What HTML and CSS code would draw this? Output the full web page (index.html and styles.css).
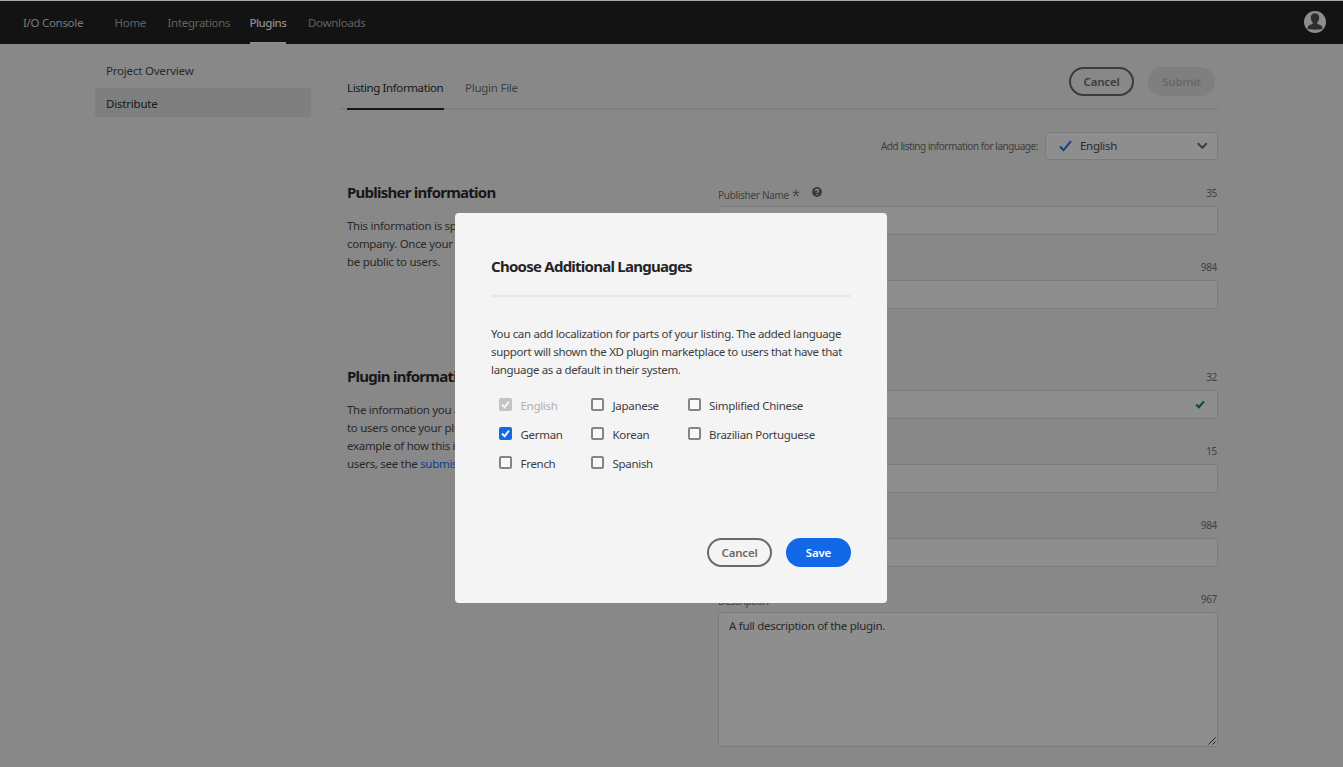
FILE: index.html
```html
<!DOCTYPE html>
<html lang="en">
<head>
<meta charset="utf-8">
<title>I/O Console</title>
<link rel="stylesheet" href="styles.css">
</head>
<body>
<header class="topbar">
  <span class="brand">I/O Console</span>
  <nav class="nav">
    <a class="nav-item home">Home</a>
    <a class="nav-item integrations">Integrations</a>
    <a class="nav-item plugins active">Plugins</a>
    <a class="nav-item downloads">Downloads</a>
  </nav>
  <svg class="avatar" width="22" height="22" viewBox="0 0 22 22"><circle cx="11" cy="11" r="11" fill="#8d8d8d"/><path d="M11 2.200c2.600 0 4.200 1.700 4.200 4.200 0 2-.8 3.600-1.700 4.700-.5.700-.4 1.900.5 2.200 2.500.6 4.400 1.500 4.400 3.600v.9c-1.700 1.200-13.100 1.200-14.800 0v-.9c0-2.100 1.900-3 4.400-3.600.9-.3 1-1.500.5-2.200C7.600 10 6.800 8.400 6.800 6.400c0-2.500 1.600-4.200 4.200-4.200z" fill="#2e2e2e"/></svg>
</header>
<div class="page">
  <aside class="sidebar">
    <a class="side-item overview">Project Overview</a>
    <a class="side-item distribute selected">Distribute</a>
  </aside>
  <main class="main">
    <div class="main-head">
      <div class="tabs">
        <a class="tab listing active">Listing Information</a>
        <a class="tab file">Plugin File</a>
      </div>
      <div class="actions">
        <button class="btn outline dim">Cancel</button>
        <button class="btn disabled">Submit</button>
      </div>
    </div>
    <div class="lang-row">
      <span class="lang-label">Add listing information for language:</span>
      <div class="select">
        <svg width="14" height="12" viewBox="0 0 14 12"><path d="M1 6.500L4.600 10.200 12 1.200" fill="none" stroke="#0c3f8c" stroke-width="1.900"/></svg>
        <span class="select-value">English</span>
        <svg width="12" height="8" viewBox="0 0 12 8"><path d="M2.300 1.800L6.300 5.800 10.300 1.800" fill="none" stroke="#3d3d3d" stroke-width="2" stroke-linecap="round" stroke-linejoin="round"/></svg>
      </div>
    </div>
    <section class="section publisher">
      <div class="intro">
        <h2>Publisher information</h2>
        <p>This information is specific<br>company. Once your<br>be public to users.</p>
      </div>
      <div class="fields">
        <div class="field">
          <div class="field-top"><span class="field-label">Publisher Name</span>
            <svg class="star" width="8" height="8" viewBox="0 0 8 8"><path d="M4 .4V4M.6 3L4 4 7.400 3M1.900 7.200L4 4l2.100 3.200" fill="none" stroke="#444" stroke-width="1.100"/></svg>
            <svg class="help" width="10" height="10" viewBox="0 0 10 10"><circle cx="5" cy="5" r="5" fill="#3c3c3c"/><path d="M3.500 3.700C3.700 1.900 6.500 2.100 6.500 3.800 6.500 4.900 5 4.800 5 6M5 7v1" fill="none" stroke="#929292" stroke-width="1.200"/></svg>
            <span class="count">35</span></div>
          <div class="input"></div>
        </div>
        <div class="field"><div class="field-top"><span class="count">984</span></div><div class="input"></div></div>
      </div>
    </section>
    <section class="section plugin">
      <div class="intro">
        <h2>Plugin information</h2>
        <p>The information you add<br>to users once your plugin<br>example of how this is<br>users, see the <a class="link">submission</a></p>
      </div>
      <div class="fields">
        <div class="field"><div class="field-top"><span class="count">32</span></div><div class="input valid"><svg width="10" height="9" viewBox="0 0 10 9"><path d="M1.200 4.500L3.900 7.300 8.900 1.400" fill="none" stroke="#0b4a35" stroke-width="2.100"/></svg></div></div>
        <div class="field"><div class="field-top"><span class="count">15</span></div><div class="input"></div></div>
        <div class="field"><div class="field-top"><span class="count">984</span></div><div class="input"></div></div>
        <div class="field">
          <div class="field-top"><span class="field-label desc">Description</span>
            <svg class="star" width="8" height="8" viewBox="0 0 8 8"><path d="M4 .4V4M.6 3L4 4 7.400 3M1.900 7.200L4 4l2.100 3.200" fill="none" stroke="#444" stroke-width="1.100"/></svg>
            <svg class="help" width="10" height="10" viewBox="0 0 10 10"><circle cx="5" cy="5" r="5" fill="#3c3c3c"/></svg>
            <span class="count">967</span></div>
          <div class="input textarea"><span class="textarea-value">A full description of the plugin.</span>
            <svg class="grip" width="8" height="8" viewBox="0 0 8 8"><path d="M.5 7.500l7-7M4.500 7.500l3-3" stroke="#222" stroke-width="1"/></svg></div>
        </div>
      </div>
    </section>
  </main>
</div>
<div class="overlay">
  <div class="modal">
    <h1>Choose Additional Languages</h1>
    <p class="modal-text">You can add localization for parts of your listing. The added language<br>support will shown the XD plugin marketplace to users that have that<br>language as a default in their system.</p>
    <div class="langs">
      <label class="check off"><span class="box"><svg width="13" height="13" viewBox="0 0 13 13"><path d="M3 6.500L5.600 9.200 10 3.600" fill="none" stroke="#f4f4f4" stroke-width="1.900"/></svg></span>English</label>
      <label class="check"><span class="box"></span>Japanese</label>
      <label class="check"><span class="box"></span>Simplified Chinese</label>
      <label class="check on"><span class="box"><svg width="13" height="13" viewBox="0 0 13 13"><path d="M3 6.500L5.600 9.200 10 3.600" fill="none" stroke="#f4f4f4" stroke-width="1.900"/></svg></span>German</label>
      <label class="check"><span class="box"></span>Korean</label>
      <label class="check"><span class="box"></span>Brazilian Portuguese</label>
      <label class="check"><span class="box"></span>French</label>
      <label class="check"><span class="box"></span>Spanish</label>
    </div>
    <div class="modal-actions">
      <button class="btn outline">Cancel</button>
      <button class="btn primary">Save</button>
    </div>
  </div>
</div>
</body>
</html>
```
FILE: styles.css
```css
* { box-sizing: border-box; }
body {
  margin: 0;
  height: 767px;
  overflow: hidden;
  background: #888;
  border-top: 1px solid #a8a8a8;
  font-family: "Noto Sans", "Open Sans", sans-serif;
  font-size: 11.5px;
  letter-spacing: -0.3px;
  line-height: 18px;
  color: #282828;
  white-space: nowrap;
}
h1, h2, p { margin: 0; }

.topbar { display: flex; height: 43px; padding-left: 23px; background: #131313; color: #626262; }
.brand { width: 91.500px; line-height: 43px; color: #7b7b7b; }
.nav { display: flex; gap: 22px; flex: 1; }
.nav-item { height: 43px; line-height: 43px; }
.home { width: 31px; }
.integrations { width: 60px; }
.plugins { width: 36.500px; }
.nav-item.active { border-bottom: 2px solid #8e8e8e; color: #8e8e8e; font-weight: 500; letter-spacing: -0.5px; }
.avatar { margin: 10px 17px 0 0; }

.page { display: flex; padding-left: 95px; }
.sidebar { width: 216px; padding-top: 12px; letter-spacing: -0.2px; }
.side-item { display: block; height: 29px; padding-left: 11px; line-height: 29px; border-radius: 3px; margin-bottom: 3px; }
.side-item.selected { padding-top: 1px; background: #7f7f7f; color: #161616; }

.main { width: 878px; margin-left: 29px; }
.main-head { display: flex; justify-content: space-between; height: 66px; padding: 0 3px 0 7px; border-bottom: 2px solid #808080; }
.tabs { display: flex; gap: 21px; padding-top: 30px; }
.tab { height: 36px; line-height: 27px; color: #404040; letter-spacing: -0.25px; }
.tab.active { width: 97px; border-bottom: 2px solid #171717; color: #171717; letter-spacing: -0.4px; }
.actions { display: flex; gap: 14px; padding-top: 23px; }
.btn { width: 65px; height: 29px; padding: 0; border: 0; border-radius: 15px; font: 600 11.5px/25px "Noto Sans", sans-serif; letter-spacing: -0.2px; }
.btn.outline { border: 2px solid #6a6a6a; background: transparent; color: #6a6a6a; }
.btn.outline.dim { border-color: #3b3b3b; color: #3b3b3b; }
.btn.disabled { width: 67px; background: #7f7f7f; color: #686868; }
.btn.primary { background: #1268e6; color: #fff; }

.lang-row { display: flex; justify-content: flex-end; align-items: center; gap: 7px; padding-top: 22px; }
.lang-label { font-size: 10px; letter-spacing: -0.45px; color: #3d3d3d; }
.select { display: flex; align-items: center; width: 173px; height: 28px; padding: 0 9px 0 13px; border: 1px solid #7b7b7b; border-radius: 3px; background: #8e8e8e; }
.select-value { flex: 1; margin-left: 7px; }

.section { display: flex; padding-left: 7px; }
.publisher { height: 184px; padding-top: 24px; }
.plugin { padding-top: 23px; }
.publisher { height: 185px; }
.intro { width: 371px; }
.intro h2 { margin-top: -2px; font-size: 15px; line-height: 20px; letter-spacing: -0.75px; color: #171717; }
.intro p { margin-top: 15px; }
.link { color: #0b3f8f; }
.fields { width: 500px; }
.field { height: 74px; }
.field-top { display: flex; height: 22px; font-size: 10px; line-height: 18px; letter-spacing: -0.3px; color: #404040; }
.field-label { width: 70px; padding-top: 2px; }
.desc { width: 51px; }
.star { margin: 5px 0 0 4px; }
.help { margin: 3px 0 0 12px; }
.count { margin-left: auto; padding-right: 1px; }
.input { height: 29px; border: 1px solid #7b7b7b; border-radius: 3px; background: #8e8e8e; }
.input.valid { display: flex; justify-content: flex-end; align-items: center; padding-right: 12px; }
.textarea { position: relative; height: 135px; padding: 4px 10px; }
.grip { position: absolute; right: 1px; bottom: 1px; }

.overlay { position: fixed; inset: 0; padding: 213px 0 0 455px; }
.modal { width: 432px; height: 390px; padding: 42px 36px 36px; border-radius: 4px; background: #f4f4f4; color: #3c3c3c; }
.modal h1 { height: 42px; border-bottom: 2px solid #e7e7e7; font-size: 15px; line-height: 22px; letter-spacing: -0.75px; color: #252525; }
.modal-text { margin-top: 28px; letter-spacing: -0.33px; }
.langs { display: grid; grid-template-columns: 92px 96.500px 1fr; grid-auto-rows: 29px; margin: 12px 0 0 8px; }
.check { display: flex; height: 29px; line-height: 29px; }
.box { display: flex; width: 13px; height: 13px; margin: 7px 8.500px 0 0; border: 2px solid #858585; border-radius: 2px; background: #f8f8f8; }
.off { color: #b0b0b0; }
.off .box { border: 0; background: #c4c4c4; }
.on .box { border: 0; background: #1268e6; }
.modal-actions { display: flex; justify-content: flex-end; gap: 14px; margin-top: 60px; }
```
